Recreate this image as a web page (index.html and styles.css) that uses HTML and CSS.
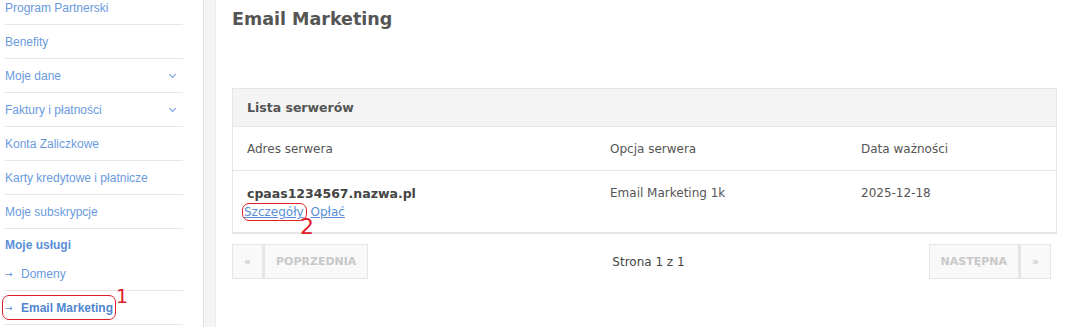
FILE: index.html
```html
<!DOCTYPE html>
<html lang="pl">
<head>
    <meta charset="UTF-8">
    <meta name="viewport" content="width=device-width, initial-scale=1.0">
    <title>Email Marketing</title>
    <link rel="stylesheet" href="styles.css">
</head>
<body>
    <div class="layout">
        <aside class="sidebar">
            <ul class="menu">
                <li class="menu-item"><a href="#">Program Partnerski</a></li>
                <li class="menu-item"><a href="#">Benefity</a></li>
                <li class="menu-item"><a href="#">Moje dane</a><span class="chevron"></span></li>
                <li class="menu-item"><a href="#">Faktury i płatności</a><span class="chevron"></span></li>
                <li class="menu-item"><a href="#">Konta Zaliczkowe</a></li>
                <li class="menu-item"><a href="#">Karty kredytowe i płatnicze</a></li>
                <li class="menu-item"><a href="#">Moje subskrypcje</a></li>
                <li class="menu-heading">Moje usługi</li>
                <li class="menu-item sub"><span class="arrow">&#8594;</span><a href="#">Domeny</a></li>
                <li class="menu-item sub active">
                    <span class="mark mark-1">
                        <span class="arrow">&#8594;</span><a href="#">Email Marketing</a>
                    </span>
                    <span class="mark-num num-1">1</span>
                </li>
            </ul>
        </aside>
        <div class="strip"></div>

        <main class="content">
            <h1>Email Marketing</h1>

            <div class="panel">
                <div class="panel-head">Lista serwerów</div>
                <div class="row row-head">
                    <div>Adres serwera</div>
                    <div>Opcja serwera</div>
                    <div>Data ważności</div>
                </div>
                <div class="row row-data">
                    <div>
                        <div class="server">cpaas1234567.nazwa.pl</div>
                        <div class="links">
                            <span class="mark mark-2"><a href="#">Szczegóły</a></span>
                            <a href="#">Opłać</a>
                            <span class="mark-num num-2">2</span>
                        </div>
                    </div>
                    <div>Email Marketing 1k</div>
                    <div>2025-12-18</div>
                </div>
            </div>

            <div class="pager">
                <div class="pager-group">
                    <span class="page-btn small">&laquo;</span>
                    <span class="page-btn">Poprzednia</span>
                </div>
                <div class="pager-info">Strona 1 z 1</div>
                <div class="pager-group">
                    <span class="page-btn">Następna</span>
                    <span class="page-btn small">&raquo;</span>
                </div>
            </div>
        </main>
    </div>
</body>
</html>
```

FILE: styles.css
```css
body {
    margin: 0;
    padding: 0;
    background: #fff;
    font-family: "DejaVu Sans", Verdana, sans-serif;
    color: #555;
    overflow: hidden;
}

a {
    color: #5a8fd8;
    text-decoration: none;
}

.layout {
    display: flex;
    height: 327px;
}

/* sidebar */

.sidebar {
    width: 203px;
    padding-left: 5px;
    box-sizing: border-box;
    font-family: "Liberation Sans", Arial, sans-serif;
    font-size: 12px;
}

.menu {
    list-style: none;
    margin: -9px 0 0;
    padding: 0;
    width: 178px;
}

.menu-item {
    display: flex;
    align-items: center;
    height: 33px;
    border-bottom: 1px solid #e6e6e6;
    position: relative;
}

.menu-item a {
    color: #6a9ade;
}

.chevron {
    margin-left: auto;
    margin-right: 8px;
    width: 4px;
    height: 4px;
    border-right: 1px solid #6a9ade;
    border-bottom: 1px solid #6a9ade;
    transform: rotate(45deg);
    margin-top: -3px;
}

.menu-heading {
    height: 25px;
    padding-top: 3px;
    display: flex;
    align-items: center;
    font-weight: bold;
    color: #5a8fd8;
    font-size: 12px;
}

.menu-item.sub a {
    padding-left: 8px;
}

.arrow {
    color: #5a8fd8;
    font-family: "DejaVu Sans", sans-serif;
    font-weight: normal;
    font-size: 9px;
    width: 8px;
}

.menu-item.active {
    font-weight: bold;
}

.menu-item.active a {
    color: #4f86d2;
}

.strip {
    width: 11px;
    background: #f4f4f4;
    border-left: 1px solid #e2e2e2;
    border-right: 1px solid #ececec;
}

/* annotations */

.mark {
    border: 1.5px solid #e0202a;
    border-radius: 7px;
}

.mark-1 {
    display: flex;
    align-items: center;
    margin-left: -3px;
    padding: 2px 2px 2px 2px;
    height: 19px;
}

.mark-2 {
    padding: 1px 2px 1px 1px;
    margin-left: -5px;
}

.mark-num {
    position: absolute;
    color: #e0202a;
    font-family: "DejaVu Sans", sans-serif;
    font-weight: normal;
    font-size: 19px;
}

.num-1 {
    left: 111px;
    top: -6px;
}

.num-2 {
    left: 53px;
    top: 9px;
    font-size: 22px;
}

/* content */

.content {
    flex: 1;
    padding: 0 18px 0 16px;
}

h1 {
    font-size: 17.5px;
    color: #555;
    margin: 9px 0 0;
    height: 79px;
}

.panel {
    border: 1px solid #e6e6e6;
    border-bottom-width: 2px;
    font-size: 12px;
}

.panel-head {
    background: #f4f4f4;
    height: 37px;
    line-height: 37px;
    padding-left: 14px;
    font-weight: bold;
    font-size: 12.5px;
    color: #555;
    border-bottom: 1px solid #e6e6e6;
}

.row {
    display: grid;
    grid-template-columns: 363px 251px 1fr;
    padding-left: 14px;
}

.row-head {
    height: 43px;
    align-items: center;
    border-bottom: 1px solid #e6e6e6;
}

.row-data {
    height: 61px;
    padding-top: 15px;
    box-sizing: border-box;
}

.server {
    font-weight: bold;
    font-size: 12.5px;
    color: #444;
}

.links {
    position: relative;
    margin-top: 4px;
    font-size: 12px;
}

.links a {
    text-decoration: underline;
}

/* pagination */

.pager {
    display: flex;
    justify-content: space-between;
    align-items: center;
    margin-top: 10px;
}

.pager-group {
    display: flex;
    flex-shrink: 0;
}

.pager-group:last-child {
    margin-right: 6px;
}

.pager-info {
    font-size: 12px;
    color: #444;
}

.page-btn {
    height: 33px;
    line-height: 33px;
    padding: 0 11px;
    border: 1px solid #e6e6e6;
    background: #f9f9f9;
    color: #c8c8c8;
    font-weight: bold;
    font-size: 11px;
    text-transform: uppercase;
    flex-shrink: 0;
}

.page-btn + .page-btn {
    border-left-width: 2px;
}

.page-btn.small {
    width: 29px;
    padding: 0;
    text-align: center;
    font-size: 10px;
}
```
